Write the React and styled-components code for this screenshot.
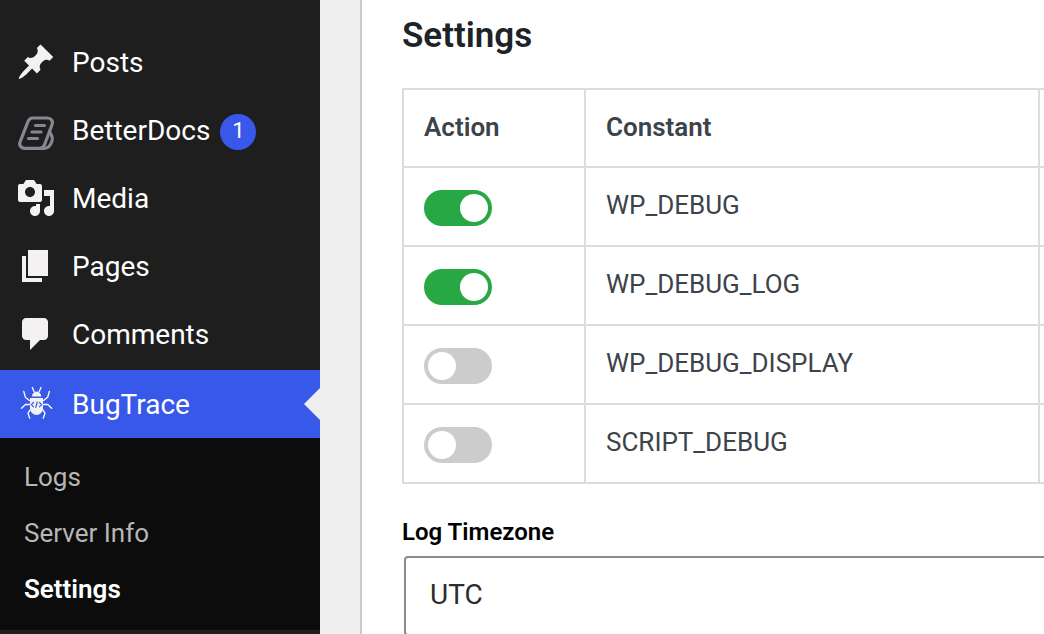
import React, { useState } from "react";
import styled, { createGlobalStyle } from "styled-components";

const GlobalStyle = createGlobalStyle`
  * {
    box-sizing: border-box;
  }
  body {
    margin: 0;
    overflow: hidden;
    background: #efefef;
    font-family: Roboto, "Liberation Sans", sans-serif;
  }
`;

const Layout = styled.div`
  display: flex;
  min-height: 100vh;
`;

const Sidebar = styled.nav`
  flex: 0 0 320px;
  padding-top: 28px;
  background: #1e1e1e;
`;

const MenuList = styled.ul`
  margin: 0;
  padding: 0;
  list-style: none;
`;

const MenuLink = styled.a`
  position: relative;
  display: flex;
  align-items: center;
  gap: 16px;
  height: 68px;
  margin-top: ${p => (p.$current ? "2px" : "0")};
  padding: 0 16px;
  background: ${p => (p.$current ? "#3858e9" : "transparent")};
  color: #fff;
  font-size: 28px;
  line-height: 36px;
  text-decoration: none;

  svg {
    flex: none;
    width: 40px;
    height: 40px;
    fill: #f3f1f1;
  }
`;

const Arrow = styled.span`
  position: absolute;
  right: 0;
  top: 18px;
  border: 16px solid transparent;
  border-left-width: 0;
  border-right-color: #efefef;
`;

const MenuLabel = styled.span`
  display: flex;
  align-items: center;
  gap: 10px;
  padding-top: 2px;
`;

const Badge = styled.span`
  width: 36px;
  height: 36px;
  margin-top: 2px;
  border-radius: 50%;
  background: #3858e9;
  font-size: 22px;
  line-height: 34px;
  text-align: center;
`;

const SubMenu = styled.ul`
  margin: 0;
  padding: 11px 0 13px;
  background: #0c0c0c;
  list-style: none;
`;

const SubLink = styled.a`
  display: block;
  padding: 0 24px;
  color: ${p => (p.$current ? "#fff" : "#b6b6b6")};
  font-size: 26px;
  font-weight: ${p => (p.$current ? 600 : 400)};
  line-height: 56px;
  text-decoration: none;
`;

const Panel = styled.main`
  flex: 1;
  min-width: 0;
  margin-left: 40px;
  padding: 16px 0 0 40px;
  border-left: 2px solid #ccc;
  background: #fff;
  overflow: hidden;
`;

const Title = styled.h2`
  margin: 0 0 32px;
  color: #1d2327;
  font-size: 35px;
  font-weight: 600;
  line-height: 40px;
`;

const Table = styled.table`
  width: 100%;
  min-width: 1200px;
  border-collapse: collapse;
  table-layout: fixed;
  color: #3c434a;
  font-size: 26px;
  line-height: 36px;

  th,
  td {
    height: 79px;
    padding: 0 20px;
    border: 2px solid #dcdcdc;
    text-align: left;
    vertical-align: middle;
  }
  th {
    height: 78px;
    padding-bottom: 2px;
    font-weight: 600;
  }
  td label {
    display: block;
    padding-bottom: 4px;
  }
`;

const ActionCol = styled.col`
  width: 182px;
`;

const ConstantCol = styled.col`
  width: 454px;
`;

const Switch = styled.input`
  display: block;
  appearance: none;
  width: 68px;
  height: 36px;
  margin: 2px 0 0;
  padding: 4px;
  border-radius: 18px;
  background: ${p => (p.checked ? "#28a745" : "#ccc")};
  cursor: pointer;

  &::before {
    content: "";
    display: block;
    width: 28px;
    height: 28px;
    margin-left: ${p => (p.checked ? "32px" : "0")};
    border-radius: 50%;
    background: #fff;
  }
`;

const Field = styled.div`
  min-width: 1200px;
  margin-top: 32px;
`;

const FieldLabel = styled.label`
  display: block;
  margin-bottom: 8px;
  color: #000;
  font-size: 24px;
  font-weight: 600;
  line-height: 32px;
`;

const Select = styled.select`
  display: block;
  appearance: none;
  width: 100%;
  height: 80px;
  margin-left: 2px;
  padding: 0 24px 4px;
  border: 2px solid #8c8c8c;
  border-radius: 4px;
  background: #fff;
  color: #2c2c2c;
  font-family: inherit;
  font-size: 28px;
`;

const PostsIcon = () => (
  <svg viewBox="0 0 20 20" aria-hidden="true">
    <path d="M10.44 3.02l1.82-1.82 6.36 6.35-1.83 1.82c-1.05-.68-2.48-.57-3.41.36l-.75.75c-.92.93-1.04 2.35-.35 3.41l-1.83 1.82-2.41-2.41-2.8 2.79c-.42.42-3.38 2.71-3.8 2.29s1.86-3.39 2.28-3.81l2.79-2.79L4.1 9.36l1.83-1.82c1.05.69 2.48.57 3.4-.36l.75-.75c.93-.92 1.05-2.35.36-3.41z" />
  </svg>
);

const DocsIcon = () => (
  <svg viewBox="0 0 40 40" aria-hidden="true">
    <g
      style={{ fill: "none" }}
      stroke="#888692"
      strokeWidth="3.2"
      strokeLinecap="round"
      strokeLinejoin="round"
    >
      <path d="M16.500 8H31c4.200 0 6.400 3 5 6.700L29 33.500c-1.200 3.200-2.800 4.900-5.500 4.900H9c-4.300 0-6.500-3.400-4.600-7.200L12 11.500C13.200 9 14.300 8 16.500 8z" />
      <path d="M33.500 21.500l2.200 4.200c.9 1.800.9 3.300.3 5.200-1.300 4.500-4 7.500-8 7.500h-4.500" />
      <path d="M19.500 15.500h9M16 22h9M12.500 28.500h9" />
    </g>
  </svg>
);

const MediaIcon = () => (
  <svg viewBox="0 0 20 20" aria-hidden="true">
    <path d="M13 11V4c0-.55-.45-1-1-1h-1.67L9 1H5L3.67 3H2c-.55 0-1 .45-1 1v7c0 .55.45 1 1 1h10c.55 0 1-.45 1-1zM7 4.500c1.380 0 2.500 1.120 2.500 2.500S8.380 9.500 7 9.500 4.500 8.380 4.500 7 5.620 4.500 7 4.500zM14 6h5v10.500c0 1.380-1.120 2.500-2.500 2.500S14 17.880 14 16.500s1.120-2.500 2.500-2.500c.17 0 .34.02.5.05V9h-3V6zm-4 8.050V13h2v3.500c0 1.380-1.120 2.500-2.500 2.500S7 17.880 7 16.500 8.120 14 9.500 14c.17 0 .34.02.5.05z" />
  </svg>
);

const PagesIcon = () => (
  <svg viewBox="0 0 20 20" aria-hidden="true">
    <path d="M6 15V2h10v13H6zm-1 1h8v2H3V5h2v11z" />
  </svg>
);

const CommentsIcon = () => (
  <svg viewBox="0 0 20 20" aria-hidden="true">
    <path d="M5 2h9c1.100 0 2 .9 2 2v7c0 1.100-.9 2-2 2h-2l-5 5v-5H5c-1.100 0-2-.9-2-2V4c0-1.100.9-2 2-2z" />
  </svg>
);

const BugIcon = () => (
  <svg viewBox="0 0 40 40" aria-hidden="true">
    <path d="M16 12.500a4.600 5 0 0 1 9.200 0z" />
    <path d="M14 14h13v10.500a6.500 6.500 0 0 1-13 0z" />
    <g
      style={{ fill: "none" }}
      stroke="#fff"
      strokeWidth="1.300"
      strokeLinecap="round"
      strokeLinejoin="round"
    >
      <path d="M16.300 3.500l1.700 4M25 3.500l-1.700 4" />
      <path d="M7.800 7.500l1.500 5.700 4.200 3.200M33.300 7.500l-1.600 5.700-4.200 3.200" />
      <path d="M13.500 20.500H9.500l-4 3.700M27.500 20.500h4.200l4 3.700" />
      <path d="M14 26l-2 3.200 1.800 5M27 26l2 3.200-1.800 5" />
    </g>
    <g
      style={{ fill: "none" }}
      stroke="#3858e9"
      strokeWidth="1.200"
      strokeLinecap="round"
      strokeLinejoin="round"
    >
      <path d="M17.500 18.500l-2.200 2.200 2.200 2.200M23.500 18.500l2.200 2.200-2.200 2.200M21.200 18l-1.400 5.400" />
    </g>
  </svg>
);

const menu = [
  { label: "Posts", icon: <PostsIcon /> },
  { label: "BetterDocs", icon: <DocsIcon />, count: 1 },
  { label: "Media", icon: <MediaIcon /> },
  { label: "Pages", icon: <PagesIcon /> },
  { label: "Comments", icon: <CommentsIcon /> },
  { label: "BugTrace", icon: <BugIcon />, current: true }
];

const subMenu = ["Logs", "Server Info", "Settings"];

const MenuItem = ({ label, icon, count, current }) => (
  <li>
    <MenuLink href="#" $current={current}>
      {icon}
      <MenuLabel>
        {label}
        {count && <Badge>{count}</Badge>}
      </MenuLabel>
      {current && <Arrow />}
    </MenuLink>
    {current && (
      <SubMenu>
        {subMenu.map(name => (
          <li key={name}>
            <SubLink href="#" $current={name === "Settings"}>
              {name}
            </SubLink>
          </li>
        ))}
      </SubMenu>
    )}
  </li>
);

export default function App() {
  const [constants, setConstants] = useState({
    WP_DEBUG: true,
    WP_DEBUG_LOG: true,
    WP_DEBUG_DISPLAY: false,
    SCRIPT_DEBUG: false
  });

  const handleToggle = name => {
    setConstants({ ...constants, [name]: !constants[name] });
  };

  return (
    <>
      <GlobalStyle />
      <Layout>
        <Sidebar>
          <MenuList>
            {menu.map(item => (
              <MenuItem key={item.label} {...item} />
            ))}
          </MenuList>
        </Sidebar>
        <Panel>
          <Title>Settings</Title>
          <Table>
            <colgroup>
              <ActionCol />
              <ConstantCol />
              <col />
            </colgroup>
            <thead>
              <tr>
                <th>Action</th>
                <th>Constant</th>
                <th />
              </tr>
            </thead>
            <tbody>
              {Object.keys(constants).map(name => (
                <tr key={name}>
                  <td>
                    <Switch
                      id={name}
                      type="checkbox"
                      role="switch"
                      checked={constants[name]}
                      onChange={() => handleToggle(name)}
                    />
                  </td>
                  <td>
                    <label htmlFor={name}>{name}</label>
                  </td>
                  <td />
                </tr>
              ))}
            </tbody>
          </Table>
          <Field>
            <FieldLabel htmlFor="timezone">Log Timezone</FieldLabel>
            <Select id="timezone" defaultValue="UTC">
              <option>UTC</option>
            </Select>
          </Field>
        </Panel>
      </Layout>
    </>
  );
}
